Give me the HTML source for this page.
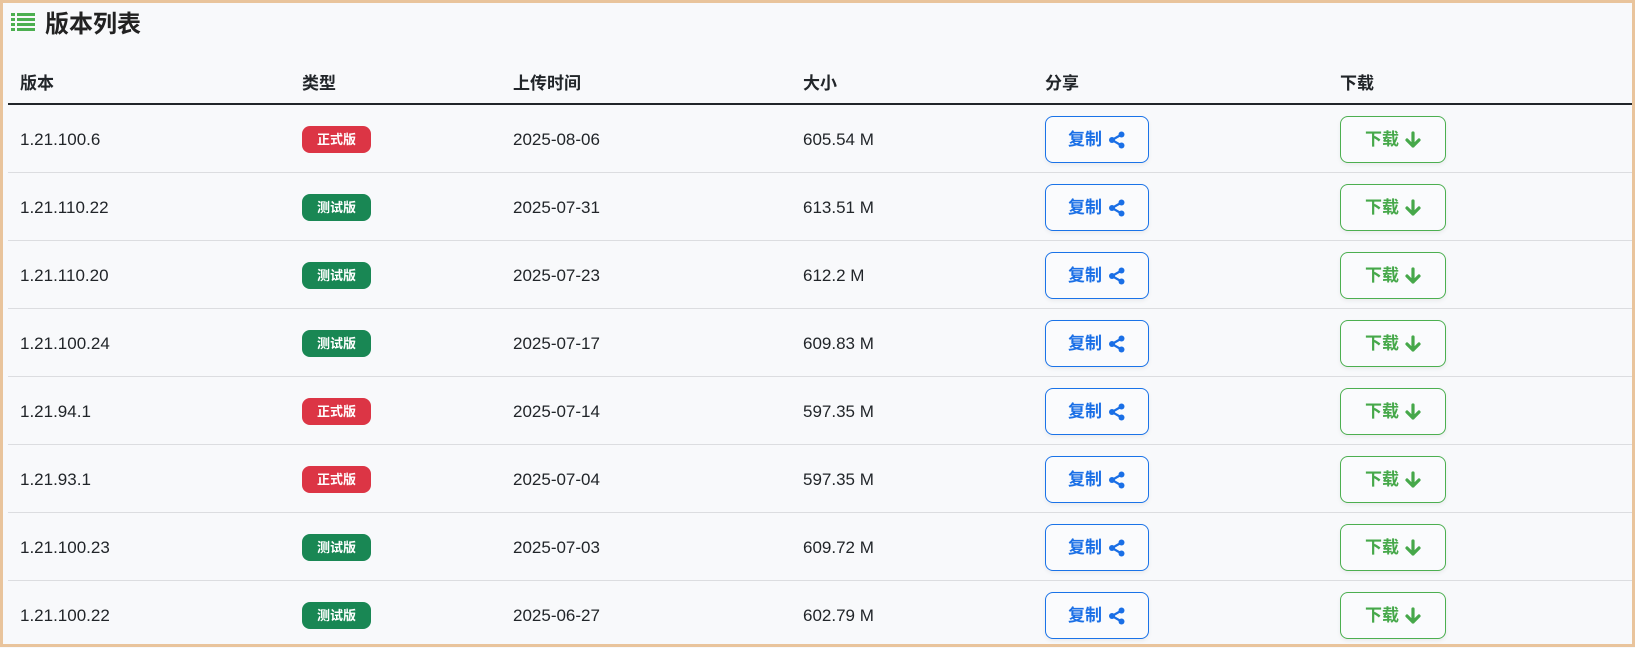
<!DOCTYPE html><html><head><meta charset="utf-8"><style>
*{box-sizing:border-box;margin:0;padding:0}
body{width:1635px;height:647px;background:#f8f9fb;border:3px solid #e9c49c;font-family:"Liberation Sans","Noto Sans CJK SC",sans-serif;color:#212529;overflow:hidden;position:relative}
.title{position:absolute;left:7px;top:1px;font-size:24px;font-weight:bold;display:flex;align-items:center;gap:9px;color:#222}
table{position:absolute;left:5px;top:56px;width:1624px;border-collapse:collapse}
th{font-weight:bold;font-size:17px;text-align:left;height:45px;border-bottom:2px solid #212529;padding-left:12px;vertical-align:middle}
td{height:68px;font-size:17px;padding-left:12px;border-bottom:1px solid #dcdde0;vertical-align:middle;padding-top:3px}
tr:last-child td{border-bottom:none}
.b{display:inline-block;color:#fff;font-size:13px;font-weight:bold;width:69px;height:27px;line-height:27px;text-align:center;border-radius:8px;vertical-align:middle}
.r{background:#dc3545}.g{background:#198754}
.btn{display:inline-flex;align-items:center;justify-content:center;gap:6px;height:47px;border-radius:8px;font-weight:bold;font-size:17px;line-height:1;background:#fafbfd;box-shadow:0 2px 4px rgba(0,0,0,.06);vertical-align:middle}
.btn span{display:block;line-height:17px}
.btn svg{display:block}
.c{width:104px;border:1px solid #1a73e8;color:#1a6fe6}
.d{width:106px;border:1px solid #4caf50;color:#46a84a}
</style></head><body>
<div class="title"><svg width="26" height="20" viewBox="0 0 24 20"><g fill="#4caf50"><rect x="0" y="1" width="4" height="3"/><rect x="6" y="1" width="18" height="3"/><rect x="0" y="6" width="4" height="3"/><rect x="6" y="6" width="18" height="3"/><rect x="0" y="11" width="4" height="3"/><rect x="6" y="11" width="18" height="3"/><rect x="0" y="16" width="4" height="3"/><rect x="6" y="16" width="18" height="3"/></g></svg>版本列表</div>
<table>
<colgroup><col style="width:282px"><col style="width:211px"><col style="width:290px"><col style="width:242px"><col style="width:295px"><col></colgroup>
<tr><th>版本</th><th>类型</th><th>上传时间</th><th>大小</th><th>分享</th><th>下载</th></tr>
<tr><td>1.21.100.6</td><td><span class="b r">正式版</span></td><td>2025-08-06</td><td>605.54 M</td><td><span class="btn c"><span>复制</span><svg width="18" height="18" viewBox="0 0 18 18"><g fill="#1a6fe6"><circle cx="13.5" cy="3.5" r="3"/><circle cx="4" cy="9" r="3"/><circle cx="13.5" cy="14.5" r="3"/></g><path d="M13.5 3.5L4 9l9.5 5.5" stroke="#1a6fe6" stroke-width="2.2" fill="none"/></svg></span></td><td><span class="btn d"><span>下载</span><svg width="16" height="18" viewBox="0 0 16 18"><path d="M8 2v13M2 9l6 6 6-6" stroke="#46a84a" stroke-width="3.2" fill="none" stroke-linecap="round" stroke-linejoin="round"/></svg></span></td></tr>
<tr><td>1.21.110.22</td><td><span class="b g">测试版</span></td><td>2025-07-31</td><td>613.51 M</td><td><span class="btn c"><span>复制</span><svg width="18" height="18" viewBox="0 0 18 18"><g fill="#1a6fe6"><circle cx="13.5" cy="3.5" r="3"/><circle cx="4" cy="9" r="3"/><circle cx="13.5" cy="14.5" r="3"/></g><path d="M13.5 3.5L4 9l9.5 5.5" stroke="#1a6fe6" stroke-width="2.2" fill="none"/></svg></span></td><td><span class="btn d"><span>下载</span><svg width="16" height="18" viewBox="0 0 16 18"><path d="M8 2v13M2 9l6 6 6-6" stroke="#46a84a" stroke-width="3.2" fill="none" stroke-linecap="round" stroke-linejoin="round"/></svg></span></td></tr>
<tr><td>1.21.110.20</td><td><span class="b g">测试版</span></td><td>2025-07-23</td><td>612.2 M</td><td><span class="btn c"><span>复制</span><svg width="18" height="18" viewBox="0 0 18 18"><g fill="#1a6fe6"><circle cx="13.5" cy="3.5" r="3"/><circle cx="4" cy="9" r="3"/><circle cx="13.5" cy="14.5" r="3"/></g><path d="M13.5 3.5L4 9l9.5 5.5" stroke="#1a6fe6" stroke-width="2.2" fill="none"/></svg></span></td><td><span class="btn d"><span>下载</span><svg width="16" height="18" viewBox="0 0 16 18"><path d="M8 2v13M2 9l6 6 6-6" stroke="#46a84a" stroke-width="3.2" fill="none" stroke-linecap="round" stroke-linejoin="round"/></svg></span></td></tr>
<tr><td>1.21.100.24</td><td><span class="b g">测试版</span></td><td>2025-07-17</td><td>609.83 M</td><td><span class="btn c"><span>复制</span><svg width="18" height="18" viewBox="0 0 18 18"><g fill="#1a6fe6"><circle cx="13.5" cy="3.5" r="3"/><circle cx="4" cy="9" r="3"/><circle cx="13.5" cy="14.5" r="3"/></g><path d="M13.5 3.5L4 9l9.5 5.5" stroke="#1a6fe6" stroke-width="2.2" fill="none"/></svg></span></td><td><span class="btn d"><span>下载</span><svg width="16" height="18" viewBox="0 0 16 18"><path d="M8 2v13M2 9l6 6 6-6" stroke="#46a84a" stroke-width="3.2" fill="none" stroke-linecap="round" stroke-linejoin="round"/></svg></span></td></tr>
<tr><td>1.21.94.1</td><td><span class="b r">正式版</span></td><td>2025-07-14</td><td>597.35 M</td><td><span class="btn c"><span>复制</span><svg width="18" height="18" viewBox="0 0 18 18"><g fill="#1a6fe6"><circle cx="13.5" cy="3.5" r="3"/><circle cx="4" cy="9" r="3"/><circle cx="13.5" cy="14.5" r="3"/></g><path d="M13.5 3.5L4 9l9.5 5.5" stroke="#1a6fe6" stroke-width="2.2" fill="none"/></svg></span></td><td><span class="btn d"><span>下载</span><svg width="16" height="18" viewBox="0 0 16 18"><path d="M8 2v13M2 9l6 6 6-6" stroke="#46a84a" stroke-width="3.2" fill="none" stroke-linecap="round" stroke-linejoin="round"/></svg></span></td></tr>
<tr><td>1.21.93.1</td><td><span class="b r">正式版</span></td><td>2025-07-04</td><td>597.35 M</td><td><span class="btn c"><span>复制</span><svg width="18" height="18" viewBox="0 0 18 18"><g fill="#1a6fe6"><circle cx="13.5" cy="3.5" r="3"/><circle cx="4" cy="9" r="3"/><circle cx="13.5" cy="14.5" r="3"/></g><path d="M13.5 3.5L4 9l9.5 5.5" stroke="#1a6fe6" stroke-width="2.2" fill="none"/></svg></span></td><td><span class="btn d"><span>下载</span><svg width="16" height="18" viewBox="0 0 16 18"><path d="M8 2v13M2 9l6 6 6-6" stroke="#46a84a" stroke-width="3.2" fill="none" stroke-linecap="round" stroke-linejoin="round"/></svg></span></td></tr>
<tr><td>1.21.100.23</td><td><span class="b g">测试版</span></td><td>2025-07-03</td><td>609.72 M</td><td><span class="btn c"><span>复制</span><svg width="18" height="18" viewBox="0 0 18 18"><g fill="#1a6fe6"><circle cx="13.5" cy="3.5" r="3"/><circle cx="4" cy="9" r="3"/><circle cx="13.5" cy="14.5" r="3"/></g><path d="M13.5 3.5L4 9l9.5 5.5" stroke="#1a6fe6" stroke-width="2.2" fill="none"/></svg></span></td><td><span class="btn d"><span>下载</span><svg width="16" height="18" viewBox="0 0 16 18"><path d="M8 2v13M2 9l6 6 6-6" stroke="#46a84a" stroke-width="3.2" fill="none" stroke-linecap="round" stroke-linejoin="round"/></svg></span></td></tr>
<tr><td>1.21.100.22</td><td><span class="b g">测试版</span></td><td>2025-06-27</td><td>602.79 M</td><td><span class="btn c"><span>复制</span><svg width="18" height="18" viewBox="0 0 18 18"><g fill="#1a6fe6"><circle cx="13.5" cy="3.5" r="3"/><circle cx="4" cy="9" r="3"/><circle cx="13.5" cy="14.5" r="3"/></g><path d="M13.5 3.5L4 9l9.5 5.5" stroke="#1a6fe6" stroke-width="2.2" fill="none"/></svg></span></td><td><span class="btn d"><span>下载</span><svg width="16" height="18" viewBox="0 0 16 18"><path d="M8 2v13M2 9l6 6 6-6" stroke="#46a84a" stroke-width="3.2" fill="none" stroke-linecap="round" stroke-linejoin="round"/></svg></span></td></tr>
</table>
</body></html>
